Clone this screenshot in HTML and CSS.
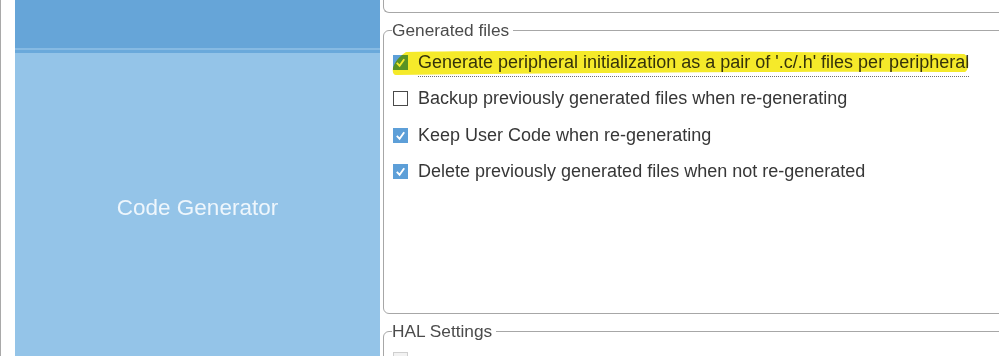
FILE: index.html
```html
<!DOCTYPE html>
<html lang="en">
<head>
<meta charset="utf-8">
<title>Project Settings - Code Generator</title>
<link rel="stylesheet" href="styles.css">
</head>
<body>
<div class="frame">
  <div class="edge"></div>
  <aside class="nav">
    <div class="nav-top"></div>
    <div class="nav-sep"></div>
    <div class="nav-item">Code Generator</div>
  </aside>
  <main class="content">
    <div class="prev-box"></div>
    <fieldset class="group group-gen">
      <legend>Generated files</legend>
      <label class="row row-marked">
        <span class="cb checked"><svg viewBox="0 0 14 14"><polyline points="3,7.5 6,10.5 11,3.5"/></svg></span>
        <span class="txt dotted">Generate peripheral initialization as a pair of '.c/.h' files per peripheral</span>
        <svg class="marker" viewBox="0 0 580 26" preserveAspectRatio="none"><path d="M16 2 C 160 0, 380 1, 574 4 C 579 5, 580 20, 575 22 C 400 21, 200 23, 6 25 C 1 25, 0 13, 16 2 Z"/></svg>
      </label>
      <label class="row">
        <span class="cb"></span>
        <span class="txt">Backup previously generated files when re-generating</span>
      </label>
      <label class="row">
        <span class="cb checked"><svg viewBox="0 0 14 14"><polyline points="3,7.5 6,10.5 11,3.5"/></svg></span>
        <span class="txt">Keep User Code when re-generating</span>
      </label>
      <label class="row">
        <span class="cb checked"><svg viewBox="0 0 14 14"><polyline points="3,7.5 6,10.5 11,3.5"/></svg></span>
        <span class="txt">Delete previously generated files when not re-generated</span>
      </label>
    </fieldset>
    <fieldset class="group group-hal">
      <legend>HAL Settings</legend>
      <div class="row row-peek">
        <span class="cb disabled"></span>
      </div>
    </fieldset>
  </main>
</div>
</body>
</html>
```
FILE: styles.css
```css
html, body {
  margin: 0;
  padding: 0;
  background: #ffffff;
}
body {
  width: 999px;
  height: 356px;
  overflow: hidden;
  font-family: "Liberation Sans", Arial, sans-serif;
}
.frame {
  display: flex;
  height: 356px;
  width: 1030px;
  overflow: hidden;
}
.edge {
  width: 1px;
  background: #a9a9a9;
  flex: none;
}
.nav {
  width: 365px;
  margin-left: 14px;
  flex: none;
  display: flex;
  flex-direction: column;
  background: #94c4e8;
}
.nav-top {
  height: 48px;
  background: #66a5d8;
}
.nav-sep {
  height: 2px;
  background: #86bae3;
  border-bottom: 3px solid #6aa9db;
}
.nav-item {
  padding-top: 142px;
  text-align: center;
  font-size: 22.5px;
  line-height: 26px;
  color: #eef6fc;
}
.content {
  flex: 1;
  padding-left: 3px;
  display: flex;
  flex-direction: column;
}
.prev-box {
  height: 12px;
  border-left: 1px solid #a7a7a7;
  border-bottom: 1px solid #a7a7a7;
  border-bottom-left-radius: 6px;
  flex: none;
}
.group {
  margin: 7px 0 0 0;
  padding: 0 0 0 8px;
  border: 1px solid #a7a7a7;
  border-radius: 6px 0 0 6px;
  min-width: 0;
  flex: none;
}
.group legend {
  padding: 0 4px 0 0;
  font-size: 17.3px;
  line-height: 20px;
  color: #4b4b4b;
}
.group-gen {
  height: 294px;
  box-sizing: border-box;
  padding-top: 4px;
}
.group-hal {
  padding-top: 4px;
  height: 120px;
}
.row {
  position: relative;
  display: flex;
  align-items: center;
  gap: 10px;
  height: 36.5px;
  margin-left: 1px;
  font-size: 18px;
  color: #373737;
}
.row-peek {
  align-items: flex-start;
  padding-top: 7px;
}
.cb {
  width: 15px;
  height: 15px;
  box-sizing: border-box;
  border: 1px solid #4a4a4a;
  background: #ffffff;
  flex: none;
  display: flex;
}
.cb.checked {
  background: #5d9fd8;
  border-color: #5d9fd8;
}
.cb.disabled {
  border-color: #cfcfcf;
  background: #f2f2f2;
}
.cb svg {
  width: 13px;
  height: 13px;
}
.cb polyline {
  fill: none;
  stroke: #ffffff;
  stroke-width: 2;
}
.txt {
  white-space: nowrap;
}
.dotted {
  text-decoration: underline dotted #6f6f6f;
  text-decoration-thickness: 1px;
  text-underline-offset: 8px;
}
.marker {
  position: absolute;
  left: -3px;
  top: 6px;
  width: 580px;
  height: 26px;
  mix-blend-mode: multiply;
  pointer-events: none;
}
.marker path {
  fill: #f5ea2a;
}
```
